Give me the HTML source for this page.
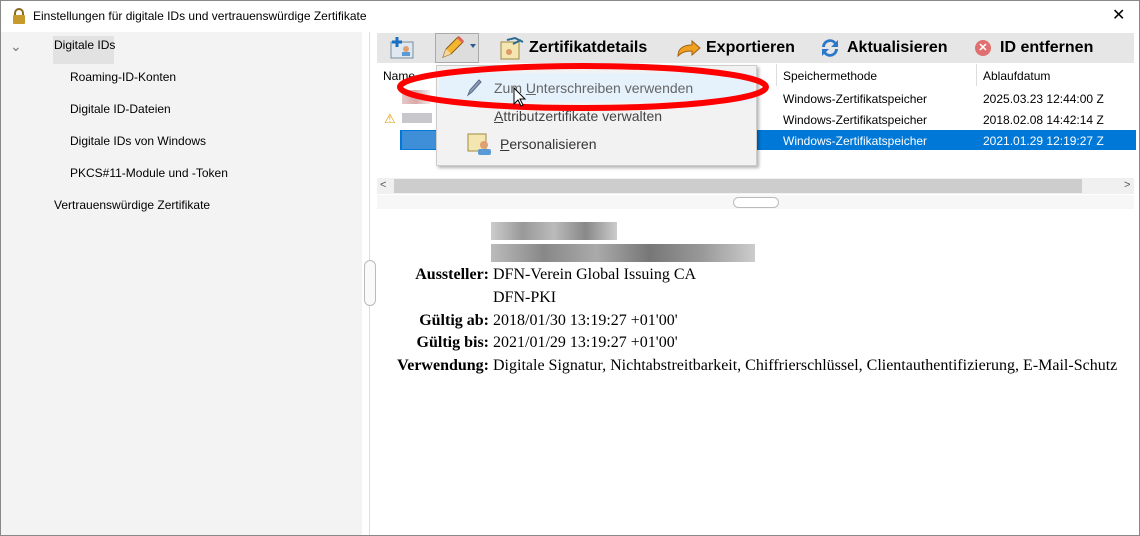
<!DOCTYPE html>
<html><head><meta charset="utf-8"><style>
*{margin:0;padding:0;box-sizing:border-box}
body{width:1140px;height:536px;overflow:hidden;background:#fff;font-family:"Liberation Sans",sans-serif;font-size:12px;color:#000;position:relative}
.a{position:absolute;white-space:nowrap}
.ser{font-family:"Liberation Serif",serif;font-size:16px}
.tb{font-weight:bold;font-size:16px}
</style></head><body>
<div class="a" style="left:0;top:0;width:1140px;height:536px;border:1px solid #888"></div>
<div class="a" style="left:12px;top:8px;width:14px;height:16px">
<svg width="14" height="16"><path d="M3 7V5a4 4 0 0 1 8 0v2" stroke="#8a6a20" stroke-width="2" fill="none"/><rect x="1" y="7" width="12" height="9" rx="1" fill="#c79a2c"/></svg></div>
<div class="a" style="left:33px;top:9px;font-size:12px">Einstellungen für digitale IDs und vertrauenswürdige Zertifikate</div>
<div class="a" style="left:1112px;top:5px;font-size:16px">✕</div>
<div class="a" style="left:1px;top:32px;width:361px;height:503px;background:#f3f3f3"></div>
<div class="a" style="left:362px;top:32px;width:8px;height:503px;background:#fff;border-right:1px solid #ddd"></div>
<div class="a" style="left:364px;top:260px;width:12px;height:46px;border:1px solid #bbb;border-radius:6px;background:#fafafa"></div>
<div class="a" style="left:53px;top:36px;width:61px;height:28px;background:#e2e2e2"></div>
<div class="a" style="left:10px;top:38px;font-size:14px;color:#777">⌄</div>
<div class="a" style="left:54px;top:38px">Digitale IDs</div>
<div class="a" style="left:70px;top:70px">Roaming-ID-Konten</div>
<div class="a" style="left:70px;top:102px">Digitale ID-Dateien</div>
<div class="a" style="left:70px;top:134px">Digitale IDs von Windows</div>
<div class="a" style="left:70px;top:166px">PKCS#11-Module und -Token</div>
<div class="a" style="left:54px;top:198px">Vertrauenswürdige Zertifikate</div>
<div class="a" style="left:377px;top:33px;width:757px;height:30px;background:#e6e6e6"></div>
<div class="a" style="left:389px;top:36px;width:26px;height:24px"><svg width="26" height="24"><rect x="2" y="6" width="22" height="16" fill="#dfe8f0" stroke="#7a8ea0"/><circle cx="17" cy="13" r="3" fill="#e0a070"/><rect x="13" y="16" width="8" height="4" fill="#5b9bd5"/><path d="M8 1v10M3 6h10" stroke="#1a6fc0" stroke-width="3"/></svg></div>
<div class="a" style="left:435px;top:33px;width:44px;height:30px;border:1px solid #aaa;background:#ddd"></div>
<div class="a" style="left:439px;top:36px"><svg width="26" height="24"><path d="M4 21l3-8 12-12 5 5-12 12z" fill="#f2b630" stroke="#8a5a10"/><path d="M4 21l3-8 5 5z" fill="#f3d6a0"/><path d="M19 1l5 5" stroke="#e06060" stroke-width="3"/></svg></div>
<div class="a" style="left:470px;top:44px;border:3px solid transparent;border-top:4px solid #2a5a90"></div>
<div class="a" style="left:499px;top:36px"><svg width="26" height="24"><rect x="2" y="6" width="18" height="17" fill="#f3e6b0" stroke="#a08a40"/><circle cx="10" cy="16" r="3" fill="#d96"/><path d="M8 4l8-2 8 4M14 8l8-4" stroke="#2a6a90" stroke-width="2" fill="none"/></svg></div>
<div class="a tb" style="left:529px;top:39px">Zertifikatdetails</div>
<div class="a" style="left:676px;top:38px"><svg width="26" height="20"><path d="M2 18c0-8 6-11 14-11V3l8 7-8 7v-4c-6 0-10 1-14 5z" fill="#f0a020" stroke="#a06010"/></svg></div>
<div class="a tb" style="left:706px;top:39px">Exportieren</div>
<div class="a" style="left:819px;top:37px"><svg width="22" height="22"><path d="M3 10a8 8 0 0 1 14-5l2-2v7h-7l3-3a5 5 0 0 0-9 3z" fill="#2a78c8"/><path d="M19 12a8 8 0 0 1-14 5l-2 2v-7h7l-3 3a5 5 0 0 0 9-3z" fill="#2a78c8"/></svg></div>
<div class="a tb" style="left:847px;top:39px">Aktualisieren</div>
<div class="a" style="left:975px;top:40px;width:16px;height:16px;border-radius:50%;background:#e07070;color:#fff;font-size:11px;text-align:center;line-height:16px;font-weight:bold">✕</div>
<div class="a tb" style="left:1000px;top:39px">ID entfernen</div>
<div class="a" style="left:383px;top:69px">Name</div>
<div class="a" style="left:776px;top:64px;width:1px;height:22px;background:#ddd"></div>
<div class="a" style="left:976px;top:64px;width:1px;height:22px;background:#ddd"></div>
<div class="a" style="left:783px;top:69px">Speichermethode</div>
<div class="a" style="left:983px;top:69px">Ablaufdatum</div>
<div class="a" style="left:402px;top:90px;width:28px;height:14px;background:linear-gradient(90deg,#e8c8c8,#d8a8a8,#eee)"></div>
<div class="a" style="left:783px;top:92px">Windows-Zertifikatspeicher</div>
<div class="a" style="left:983px;top:92px">2025.03.23 12:44:00 Z</div>
<div class="a" style="left:384px;top:111px;color:#e0a000;font-size:13px">⚠</div>
<div class="a" style="left:402px;top:113px;width:30px;height:10px;background:#c8c8cc"></div>
<div class="a" style="left:783px;top:113px">Windows-Zertifikatspeicher</div>
<div class="a" style="left:983px;top:113px">2018.02.08 14:42:14 Z</div>
<div class="a" style="left:400px;top:130px;width:736px;height:20px;background:#0078d7"></div>
<div class="a" style="left:402px;top:131px;width:34px;height:18px;background:#3f8fd8"></div>
<div class="a" style="left:783px;top:134px;color:#fff">Windows-Zertifikatspeicher</div>
<div class="a" style="left:983px;top:134px;color:#fff">2021.01.29 12:19:27 Z</div>
<div class="a" style="left:377px;top:178px;width:757px;height:16px;background:#f0f0f0"></div>
<div class="a" style="left:394px;top:179px;width:688px;height:14px;background:#cdcdcd"></div>
<div class="a" style="left:380px;top:179px;font-size:11px;color:#555">&lt;</div>
<div class="a" style="left:1124px;top:179px;font-size:11px;color:#555">&gt;</div>
<div class="a" style="left:377px;top:195px;width:757px;height:14px;background:#f7f7f7"></div>
<div class="a" style="left:733px;top:197px;width:46px;height:11px;border:1px solid #bbb;border-radius:6px;background:#fff"></div>
<div class="a" style="left:491px;top:222px;width:126px;height:18px;background:linear-gradient(90deg,#ccc,#999,#bbb,#888,#ccc)"></div>
<div class="a" style="left:491px;top:244px;width:264px;height:18px;background:linear-gradient(90deg,#bbb,#888,#aaa,#777,#999,#ccc)"></div>
<div class="a ser" style="left:0;width:489px;text-align:right;top:264px;font-weight:bold;line-height:22.75px">Aussteller:<br><br>Gültig ab:<br>Gültig bis:<br>Verwendung:</div>
<div class="a ser" style="left:493px;top:264px;line-height:22.75px">DFN-Verein Global Issuing CA<br>DFN-PKI<br>2018/01/30 13:19:27 +01'00'<br>2021/01/29 13:19:27 +01'00'<br>Digitale Signatur, Nichtabstreitbarkeit, Chiffrierschlüssel, Clientauthentifizierung, E-Mail-Schutz</div>
<div class="a" style="left:436px;top:65px;width:321px;height:101px;background:#f2f2f2;border:1px solid #ccc;box-shadow:2px 2px 3px rgba(0,0,0,.3)"></div>
<div class="a" style="left:439px;top:73px;width:315px;height:29px;background:#e5f1fb"></div>
<div class="a" style="left:466px;top:79px"><svg width="16" height="18"><path d="M2 16l2-5 9-10 2 2-9 10z" fill="#8aa0c0" stroke="#5a6a80"/></svg></div>
<div class="a" style="left:494px;top:80px;font-size:14px;color:#666">Zum <u>U</u>nterschreiben verwenden</div>
<div class="a" style="left:494px;top:108px;font-size:14px;color:#444"><u>A</u>ttributzertifikate verwalten</div>
<div class="a" style="left:467px;top:133px"><svg width="26" height="22"><rect x="1" y="1" width="18" height="17" fill="#f3e6b0" stroke="#a08a40"/><circle cx="17" cy="12" r="4" fill="#e0a070"/><rect x="11" y="16" width="13" height="6" rx="2" fill="#5b9bd5"/></svg></div>
<div class="a" style="left:500px;top:136px;font-size:14px;color:#333"><u>P</u>ersonalisieren</div>
<svg class="a" style="left:0;top:0" width="1140" height="536"><ellipse cx="583" cy="87" rx="183" ry="21" fill="none" stroke="#f00" stroke-width="6"/>
<path d="M514 88v16l4-4 3 6 2-1-3-6h5z" fill="#fff" stroke="#000"/></svg>
</body></html>
